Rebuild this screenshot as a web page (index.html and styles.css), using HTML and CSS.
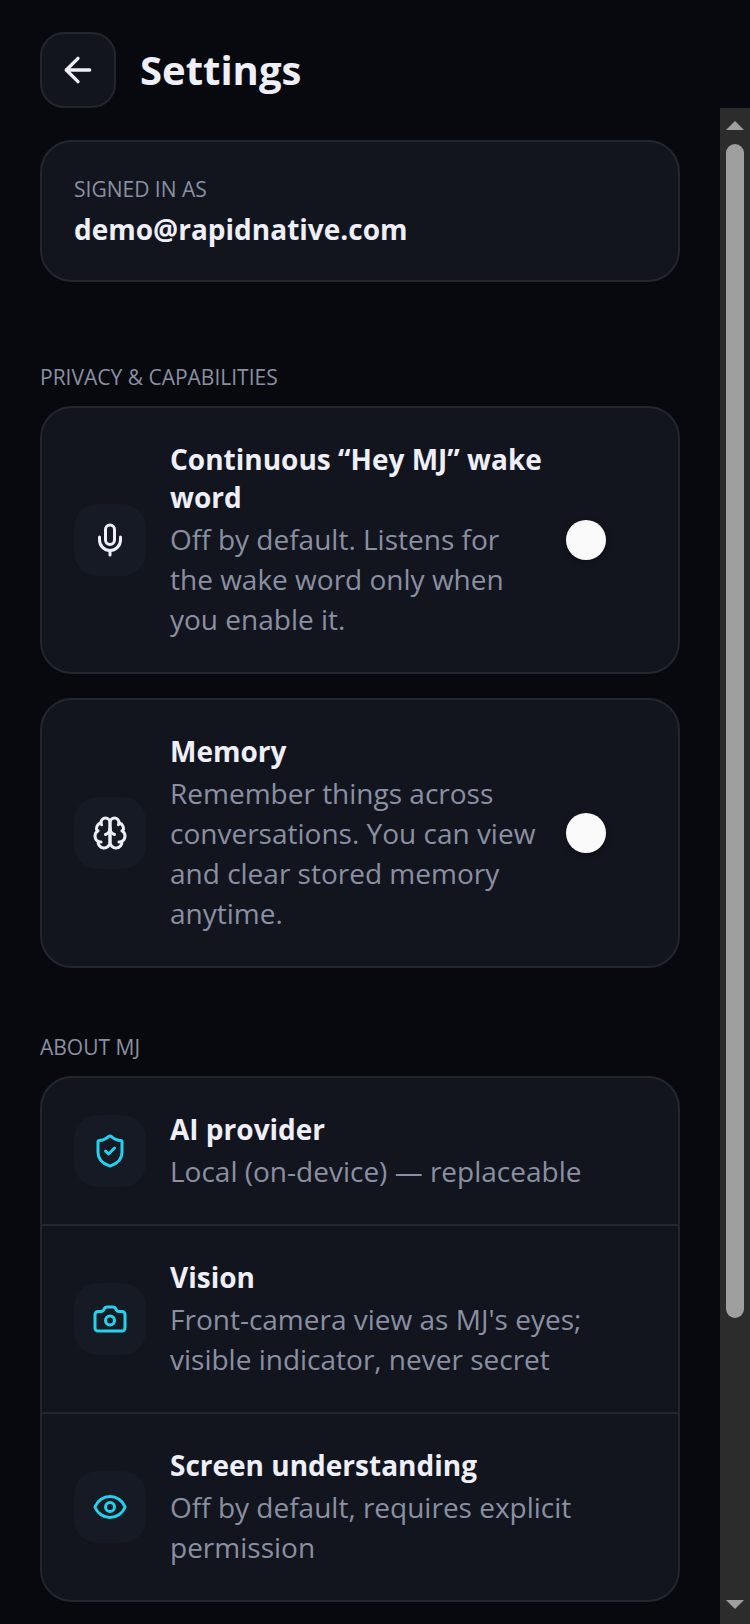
FILE: index.html
```
<!DOCTYPE html>
<html lang="en">
<head>
    <meta charset="UTF-8">
    <meta name="viewport" content="width=device-width, initial-scale=1.0">
    <title>Settings</title>
    <link rel="stylesheet" href="styles.css">
</head>
<body>
    <header class="header">
        <button class="back-button" type="button" aria-label="Back">
            <svg class="icon icon-large" viewBox="0 0 24 24"><path d="m12 19-7-7 7-7"/><path d="M19 12H5"/></svg>
        </button>
        <h1>Settings</h1>
    </header>
    <div class="body">
        <main class="content">
            <section class="card account">
                <p class="label">SIGNED IN AS</p>
                <p class="title">demo@rapidnative.com</p>
            </section>

            <section class="section section-first">
                <h2 class="label">PRIVACY &amp; CAPABILITIES</h2>
                <div class="card row">
                    <div class="icon-box">
                        <svg class="icon" viewBox="0 0 24 24"><path d="M12 19v3"/><path d="M19 10v2a7 7 0 0 1-14 0v-2"/><rect x="9" y="2" width="6" height="13" rx="3"/></svg>
                    </div>
                    <div class="row-text">
                        <label class="title" for="wake-word">Continuous “Hey MJ” wake word</label>
                        <p class="description">Off by default. Listens for the wake word only when you enable it.</p>
                    </div>
                    <input class="switch" type="checkbox" role="switch" id="wake-word">
                </div>
                <div class="card row">
                    <div class="icon-box">
                        <svg class="icon" viewBox="0 0 24 24"><path d="M12 5a3 3 0 1 0-5.997.125 4 4 0 0 0-2.526 5.77 4 4 0 0 0 .556 6.588A4 4 0 1 0 12 18Z"/><path d="M12 5a3 3 0 1 1 5.997.125 4 4 0 0 1 2.526 5.77 4 4 0 0 1-.556 6.588A4 4 0 1 1 12 18Z"/><path d="M15 13a4.5 4.5 0 0 1-3-4 4.5 4.5 0 0 1-3 4"/><path d="M17.599 6.5a3 3 0 0 0 .399-1.375"/><path d="M6.003 5.125A3 3 0 0 0 6.401 6.5"/><path d="M3.477 10.896a4 4 0 0 1 .585-.396"/><path d="M19.938 10.5a4 4 0 0 1 .585.396"/><path d="M6 18a4 4 0 0 1-1.967-.516"/><path d="M19.967 17.484A4 4 0 0 1 18 18"/></svg>
                    </div>
                    <div class="row-text">
                        <label class="title" for="memory">Memory</label>
                        <p class="description">Remember things across conversations. You can view and clear stored memory anytime.</p>
                    </div>
                    <input class="switch" type="checkbox" role="switch" id="memory">
                </div>
            </section>

            <section class="section">
                <h2 class="label">ABOUT MJ</h2>
                <div class="card">
                    <div class="row">
                        <div class="icon-box accent">
                            <svg class="icon" viewBox="0 0 24 24"><path d="M20 13c0 5-3.5 7.5-7.66 8.95a1 1 0 0 1-.67-.01C7.5 20.5 4 18 4 13V6a1 1 0 0 1 1-1c2 0 4.5-1.2 6.24-2.72a1.17 1.17 0 0 1 1.52 0C14.51 3.81 17 5 19 5a1 1 0 0 1 1 1z"/><path d="m9 12 2 2 4-4"/></svg>
                        </div>
                        <div class="row-text">
                            <h3 class="title">AI provider</h3>
                            <p class="description">Local (on-device) — replaceable</p>
                        </div>
                    </div>
                    <div class="row">
                        <div class="icon-box accent">
                            <svg class="icon" viewBox="0 0 24 24"><path d="M13.997 4a2 2 0 0 1 1.76 1.05l.486.9A2 2 0 0 0 18.003 7H20a2 2 0 0 1 2 2v9a2 2 0 0 1-2 2H4a2 2 0 0 1-2-2V9a2 2 0 0 1 2-2h1.997a2 2 0 0 0 1.759-1.048l.489-.904A2 2 0 0 1 10.004 4z"/><circle cx="12" cy="13" r="3"/></svg>
                        </div>
                        <div class="row-text">
                            <h3 class="title">Vision</h3>
                            <p class="description">Front-camera view as MJ's eyes; visible indicator, never secret</p>
                        </div>
                    </div>
                    <div class="row">
                        <div class="icon-box accent">
                            <svg class="icon" viewBox="0 0 24 24"><path d="M2.062 12.348a1 1 0 0 1 0-.696 10.75 10.75 0 0 1 19.876 0 1 1 0 0 1 0 .696 10.75 10.75 0 0 1-19.876 0"/><circle cx="12" cy="12" r="3"/></svg>
                        </div>
                        <div class="row-text">
                            <h3 class="title">Screen understanding</h3>
                            <p class="description">Off by default, requires explicit permission</p>
                        </div>
                    </div>
                </div>
            </section>
        </main>
        <div class="scrollbar" aria-hidden="true">
            <svg class="scroll-arrow" viewBox="0 0 30 36"><path d="M6 22l9-9 9 9z"/></svg>
            <div class="scroll-track"><div class="scroll-thumb"></div></div>
            <svg class="scroll-arrow" viewBox="0 0 30 36"><path d="M6 12h18l-9 9z"/></svg>
        </div>
    </div>
</body>
</html>
```
FILE: styles.css
```
* {
    box-sizing: border-box;
}

body {
    font-family: "Open Sans", sans-serif;
    background-color: #08090e;
    color: #eeeff8;
    margin: 0;
    height: 100vh;
    display: flex;
    flex-direction: column;
}

h1, h2, h3, p {
    margin: 0;
}

.header {
    display: flex;
    align-items: center;
    gap: 24px;
    padding: 32px 40px 0;
}

h1 {
    font-size: 40px;
    line-height: 54px;
    font-weight: bold;
}

.back-button {
    display: flex;
    align-items: center;
    justify-content: center;
    width: 76px;
    height: 76px;
    padding: 0;
    color: inherit;
    background-color: #12151e;
    border: 2px solid #222630;
    border-radius: 24px;
    cursor: pointer;
}

.body {
    flex: 1;
    min-height: 0;
    display: flex;
}

.content {
    flex: 1;
    padding: 32px 40px 0;
    overflow-y: auto;
    scrollbar-width: none;
}

.card {
    background-color: #12151e;
    border: 2px solid #222630;
    border-radius: 32px;
}

.account {
    padding: 32px;
    display: flex;
    flex-direction: column;
    gap: 6px;
}

.section {
    margin-top: 64px;
}

.section-first {
    margin-top: 80px;
}

.section .label {
    margin-bottom: 14px;
}

.card + .card {
    margin-top: 24px;
}

.label {
    font-size: 21px;
    line-height: 30px;
    font-weight: normal;
    color: #8a90a2;
}

.title {
    display: block;
    font-size: 28px;
    line-height: 38px;
    font-weight: bold;
}

.description {
    padding: 3px 0 1px;
    font-size: 28px;
    line-height: 40px;
    color: #8a90a2;
}

.row {
    display: flex;
    align-items: center;
    gap: 24px;
    padding: 32px;
}

.row + .row:not(.card) {
    border-top: 2px solid #222630;
}

.row-text {
    flex: 1;
}

.icon-box {
    display: flex;
    align-items: center;
    justify-content: center;
    flex: none;
    width: 72px;
    height: 72px;
    background-color: #161a24;
    border-radius: 24px;
}

.accent {
    color: #22d3ee;
}

.icon {
    width: 36px;
    height: 36px;
    fill: none;
    stroke: currentColor;
    stroke-width: 2;
    stroke-linecap: round;
    stroke-linejoin: round;
}

.icon-large {
    width: 40px;
    height: 40px;
}

.switch {
    appearance: none;
    display: flex;
    flex: none;
    width: 80px;
    height: 40px;
    margin: 0;
    border-radius: 20px;
    cursor: pointer;
}

.switch::before {
    content: "";
    width: 40px;
    height: 40px;
    background-color: #fafafa;
    border-radius: 50%;
    box-shadow: 0 2px 6px rgba(0, 0, 0, 0.3);
}

.switch:checked {
    justify-content: flex-end;
    background-color: #22d3ee;
}

.scrollbar {
    display: flex;
    flex-direction: column;
    align-items: center;
    width: 30px;
    background-color: #2c2c2c;
}

.scroll-arrow {
    width: 30px;
    height: 36px;
    fill: #9f9f9f;
}

.scroll-track {
    flex: 1;
    width: 18px;
}

.scroll-thumb {
    height: 81.3%;
    background-color: #9f9f9f;
    border-radius: 9px;
}
```
